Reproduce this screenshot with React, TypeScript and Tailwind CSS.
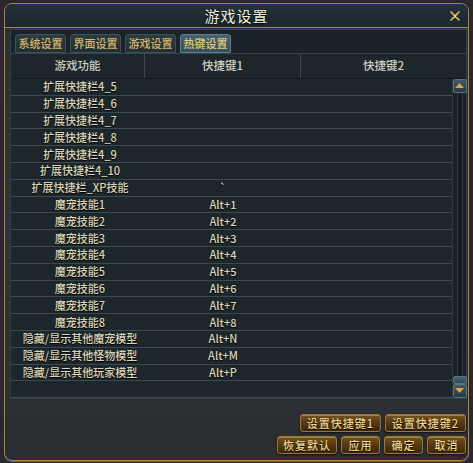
const ROWS: [string, string][] = [
  ['扩展快捷栏4_5', ''],
  ['扩展快捷栏4_6', ''],
  ['扩展快捷栏4_7', ''],
  ['扩展快捷栏4_8', ''],
  ['扩展快捷栏4_9', ''],
  ['扩展快捷栏4_10', ''],
  ['扩展快捷栏_XP技能', '`'],
  ['魔宠技能1', 'Alt+1'],
  ['魔宠技能2', 'Alt+2'],
  ['魔宠技能3', 'Alt+3'],
  ['魔宠技能4', 'Alt+4'],
  ['魔宠技能5', 'Alt+5'],
  ['魔宠技能6', 'Alt+6'],
  ['魔宠技能7', 'Alt+7'],
  ['魔宠技能8', 'Alt+8'],
  ['隐藏/显示其他魔宠模型', 'Alt+N'],
  ['隐藏/显示其他怪物模型', 'Alt+M'],
  ['隐藏/显示其他玩家模型', 'Alt+P'],
  ['', ''],
];

const TABS = ['系统设置', '界面设置', '游戏设置', '热键设置'];

const font = "font-['Noto_Sans_CJK_SC','Noto_Sans',sans-serif]";

function GoldButton({ label, w }: { label: string; w: string }) {
  return (
    <button
      className={`${w} h-[18px] flex items-center justify-center rounded-[3px] border border-[#9c7634] bg-gradient-to-b from-[#74521f] via-[#553914] to-[#3b270d] text-[11px] font-medium leading-none text-[#f2d88e] tracking-[1px] shadow-[inset_0_1px_0_rgba(255,220,140,0.35),0_1px_2px_rgba(0,0,0,0.7)] [text-shadow:0_1px_1px_#000]`}
    >
      {label}
    </button>
  );
}

function ScrollArrow({ up }: { up: boolean }) {
  return (
    <div className="w-[14px] h-[14px] flex items-center justify-center rounded-[2px] border border-[#5d7480] bg-gradient-to-b from-[#41596a] to-[#253843]">
      <svg width="9" height="6" viewBox="0 0 9 6">
        {up ? (
          <polygon points="4.5,0 9,5 0,5" fill="#e3a43c" />
        ) : (
          <polygon points="0,0 9,0 4.5,5" fill="#e3a43c" />
        )}
      </svg>
    </div>
  );
}

export default function App() {
  return (
    <div className={`w-[473px] h-[463px] bg-[#2b2630] pt-[3px] pl-[4px] pr-[4px] pb-[2px] ${font}`}>
      <div className="w-full h-full rounded-[8px] border border-[#a9843c] bg-gradient-to-b from-[#2c3135] via-[#30343a] to-[#2a2e32] flex flex-col overflow-hidden shadow-[0_1px_0_#3a6a9a]">
        {/* Title */}
        <div className="relative h-[24px] shrink-0 flex items-center justify-center border-b border-[#a9843c] bg-gradient-to-b from-[#23323a] to-[#1c272d]">
          <span className="text-[15px] leading-none text-[#f2ecd8] tracking-[1px] [text-shadow:0_1px_2px_#000]">游戏设置</span>
          <svg className="absolute right-[8px] top-[7px]" width="10" height="10" viewBox="0 0 10 10">
            <path d="M1 1 L9 9 M9 1 L1 9" stroke="#e8b85c" strokeWidth="1.7" strokeLinecap="round" />
            <circle cx="5" cy="5" r="1.3" fill="#f5d27a" />
          </svg>
        </div>

        <div className="flex flex-col pl-[5px] pr-[1px] pt-[1px]">
          {/* Tabs */}
          <div className="h-[25px] flex items-end gap-[4px] pl-[4px] border border-[#34444c] bg-[#1a2327]">
            {TABS.map((t, i) => (
              <div
                key={t}
                className={`w-[51px] h-[19px] flex items-center justify-center rounded-t-[3px] border text-[11px] font-medium leading-none ${
                  i === 3
                    ? 'border-[#5f8090] bg-gradient-to-b from-[#45636f] to-[#34505c] text-[#e8c878]'
                    : 'border-[#3f525a] bg-gradient-to-b from-[#2c3b42] to-[#222e34] text-[#d8b868]'
                }`}
              >
                {t}
              </div>
            ))}
          </div>

          {/* Table */}
          <div className="bg-[#1d272b] border border-t-0 border-[#2f3e44]">
            <div className="h-[25px] grid grid-cols-[134px_156px_1fr] border-b border-[#111a1d] text-[11.5px] font-medium leading-none text-[#cfcfc0]">
              <div className="flex items-center justify-center border-r border-[#3a4a50]">游戏功能</div>
              <div className="flex items-center justify-center border-r border-[#3a4a50]">快捷键1</div>
              <div className="flex items-center justify-center">快捷键2</div>
            </div>
            <div className="flex h-[319px]">
              <div className="flex-1 flex flex-col">
                {ROWS.map(([name, key], i) => (
                  <div
                    key={i}
                    className="h-[16.8px] grid grid-cols-[134px_156px_1fr] border-b border-[#3a4b4f] text-[11px] font-medium leading-none text-[#ddd5b8] [text-shadow:0_1px_1px_#000]"
                  >
                    <div className="flex items-center justify-center pl-[4px]">{name}</div>
                    <div className="flex items-center justify-center">{key}</div>
                    <div />
                  </div>
                ))}
              </div>
              <div className="w-[14px] flex flex-col items-center bg-[#18212a] border-l border-[#2c3a40]">
                <ScrollArrow up />
                <div className="flex-1 w-[6px] bg-[#141c20] border-x border-[#2a383e]" />
                <div className="w-[14px] h-[8px] rounded-[2px] border border-[#5d7480] bg-gradient-to-b from-[#4a6374] to-[#324958]" />
                <ScrollArrow up={false} />
              </div>
            </div>
          </div>

          {/* Buttons */}
          <div className="mt-[15px] flex flex-col items-end gap-[4px] pr-[1px]">
            <div className="flex gap-[4px]">
              <GoldButton label="设置快捷键1" w="w-[81px]" />
              <GoldButton label="设置快捷键2" w="w-[81px]" />
            </div>
            <div className="flex gap-[4px]">
              <GoldButton label="恢复默认" w="w-[60px]" />
              <GoldButton label="应用" w="w-[39px]" />
              <GoldButton label="确定" w="w-[39px]" />
              <GoldButton label="取消" w="w-[39px]" />
            </div>
          </div>
        </div>
      </div>
    </div>
  );
}
